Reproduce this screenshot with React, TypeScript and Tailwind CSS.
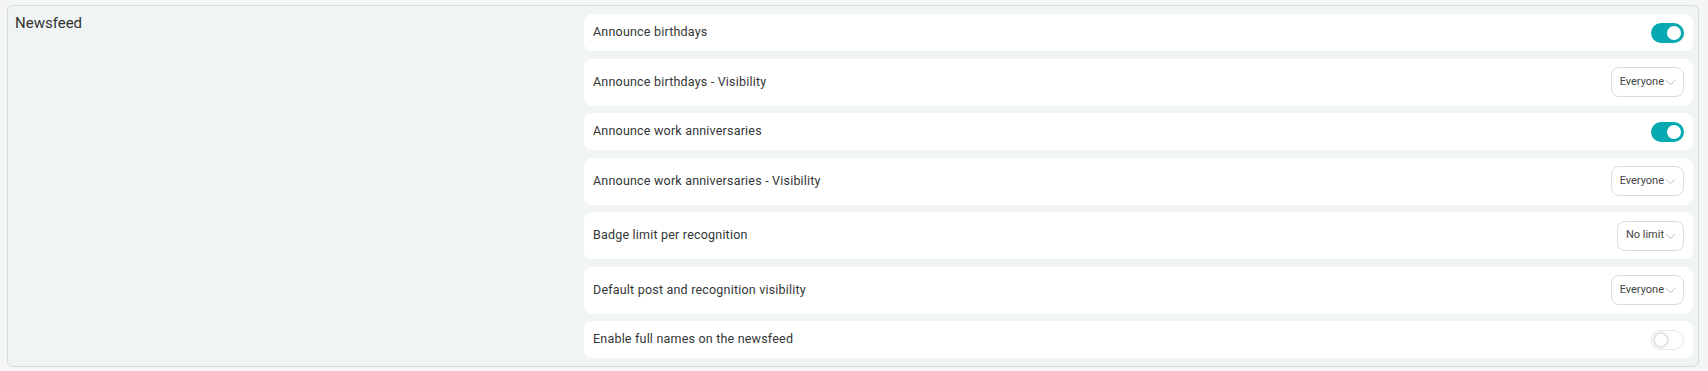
import { ChevronDown } from "lucide-react";

type Setting =
  | { id: number; label: string; kind: "toggle"; on: boolean }
  | { id: number; label: string; kind: "select"; value: string };

const settings: Setting[] = [
  { id: 1, label: "Announce birthdays", kind: "toggle", on: true },
  { id: 2, label: "Announce birthdays - Visibility", kind: "select", value: "Everyone" },
  { id: 3, label: "Announce work anniversaries", kind: "toggle", on: true },
  { id: 4, label: "Announce work anniversaries - Visibility", kind: "select", value: "Everyone" },
  { id: 5, label: "Badge limit per recognition", kind: "select", value: "No limit" },
  { id: 6, label: "Default post and recognition visibility", kind: "select", value: "Everyone" },
  { id: 7, label: "Enable full names on the newsfeed", kind: "toggle", on: false },
];

const Toggle = ({ on }: { on: boolean }) =>
  on ? (
    <div className="w-[33px] h-[20px] rounded-full bg-[#04a9b1] flex items-center justify-end px-[3px]">
      <div className="w-[14px] h-[14px] rounded-full bg-white" />
    </div>
  ) : (
    <div className="w-[33px] h-[20px] rounded-full bg-white border border-[#e4e6e6] flex items-center px-[1px]">
      <div className="w-[16px] h-[16px] rounded-full border-2 border-[#e2e4e4] bg-white" />
    </div>
  );

const Select = ({ value }: { value: string }) => (
  <div className="h-[30px] pl-[8px] pr-[4px] rounded-[8px] border border-[#d3dfdb] bg-white flex items-center text-[11px] text-[#444]">
    <span>{value}</span>
    <ChevronDown size={17} strokeWidth={1} className="text-[#a3a8a8] -ml-[2px] mt-[1px]" />
  </div>
);

export default function App() {
  return (
    <div className="min-h-screen bg-[#f4f6f6] pt-[5px] pb-[5px] pl-[7px] pr-[9px] font-['Roboto',sans-serif]">
      <div className="flex rounded-[6px] border border-[#d5dbdb] bg-[#f1f4f5]">
        <div className="w-[576px] pl-[7px] pt-[6px] text-[15px] text-[#333]">Newsfeed</div>
        <div className="flex-1 flex flex-col gap-[7.5px] pt-[8px] pb-[8px] pr-[5px]">
          {settings.map((s) => (
            <div
              key={s.id}
              className="flex items-center justify-between bg-white rounded-[8px] pl-[9px] pr-[9px] py-[8.5px]"
            >
              <span className="text-[12.5px] text-[#333636] tracking-[0.2px]">{s.label}</span>
              {s.kind === "toggle" ? <Toggle on={s.on} /> : <Select value={s.value} />}
            </div>
          ))}
        </div>
      </div>
    </div>
  );
}
